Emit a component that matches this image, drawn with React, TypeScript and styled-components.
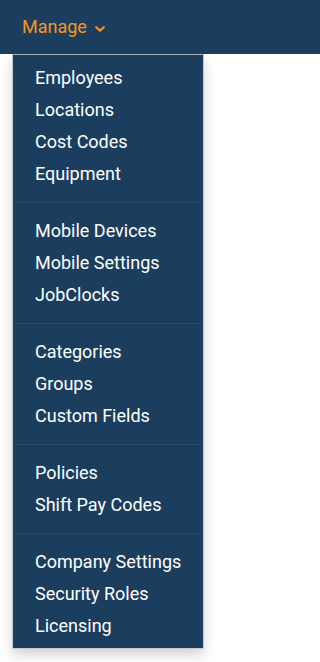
import React from 'react';
import styled, { createGlobalStyle } from 'styled-components';

const sections: string[][] = [
  ['Employees', 'Locations', 'Cost Codes', 'Equipment'],
  ['Mobile Devices', 'Mobile Settings', 'JobClocks'],
  ['Categories', 'Groups', 'Custom Fields'],
  ['Policies', 'Shift Pay Codes'],
  ['Company Settings', 'Security Roles', 'Licensing'],
];

const App = () => {
  return (
    <Page>
      <GlobalStyle />
      <NavBar>
        <NavToggle>
          Manage
          <Caret width="10" height="6" viewBox="0 0 10 6">
            <path d="M1.2 1.2 L5 4.6 L8.8 1.2" />
          </Caret>
        </NavToggle>
      </NavBar>
      <Dropdown>
        {sections.map((items, index) => (
          <React.Fragment key={index}>
            {index > 0 && <Divider />}
            {items.map((item) => (
              <MenuItem key={item}>{item}</MenuItem>
            ))}
          </React.Fragment>
        ))}
      </Dropdown>
    </Page>
  );
};

export default App;

const GlobalStyle = createGlobalStyle`
  html, body {
    margin: 0;
    padding: 0;
    background: #ffffff;
  }

  body {
    font-family: Roboto, "Liberation Sans", sans-serif;
  }
`;

const Page = styled.div`
  width: 100%;
  min-height: 662px;
  display: flex;
  flex-direction: column;
`;

const NavBar = styled.nav`
  height: 54px;
  flex-shrink: 0;
  background-color: #1b3e5e;
  display: flex;
  align-items: center;
  padding-left: 22px;
`;

const NavToggle = styled.div`
  display: flex;
  align-items: center;
  gap: 8px;
  height: 54px;
  line-height: 54px;
  font-size: 18px;
  color: #f7941e;
  cursor: pointer;
`;

const Caret = styled.svg`
  margin-top: 3px;

  path {
    fill: none;
    stroke: #f7941e;
    stroke-width: 2.2;
    stroke-linecap: round;
    stroke-linejoin: round;
  }
`;

const Dropdown = styled.ul`
  width: 192px;
  box-sizing: border-box;
  margin: 0 0 0 12px;
  padding: 7px 0 6px;
  list-style: none;
  background-color: #1b3e5e;
  border: 1px solid #c9cccf;
  border-top-color: #a9b0b7;
  box-shadow: 0 6px 12px rgba(0, 0, 0, 0.175);
`;

const MenuItem = styled.li`
  height: 32px;
  line-height: 32px;
  padding: 0 22px;
  font-size: 18px;
  color: #ffffff;
  white-space: nowrap;
  cursor: pointer;
`;

const Divider = styled.li`
  height: 1px;
  margin: 12px 0;
  background-color: #264b6d;
`;
